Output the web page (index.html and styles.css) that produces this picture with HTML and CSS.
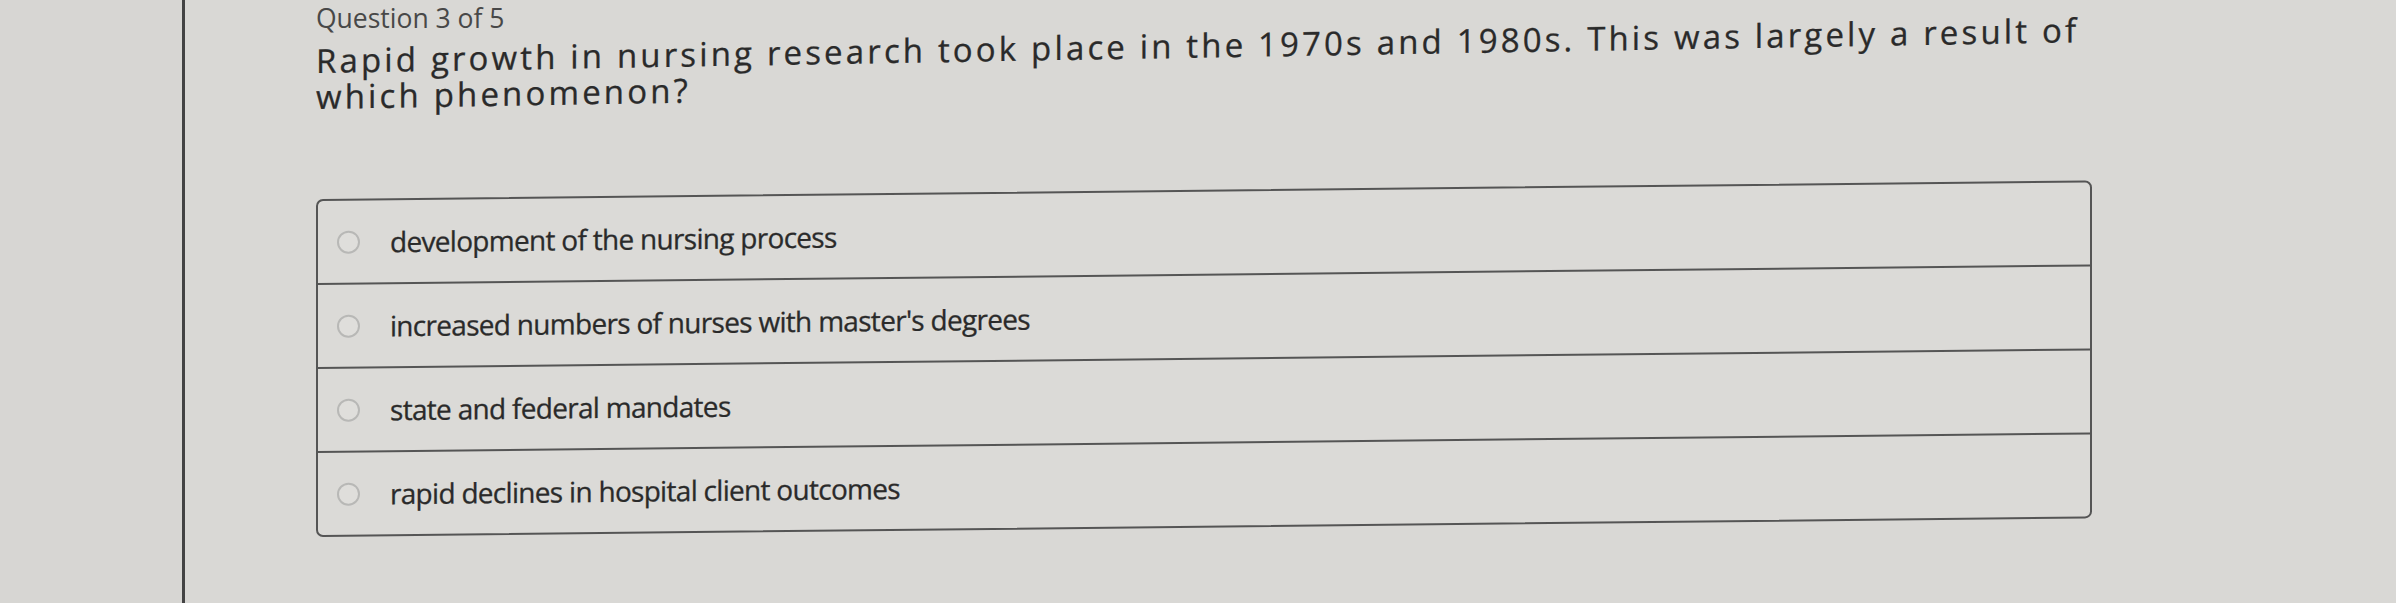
FILE: index.html
```html
<!DOCTYPE html>
<html lang="en">
<head>
    <meta charset="UTF-8">
    <meta name="viewport" content="width=device-width, initial-scale=1.0">
    <title>Question 3 of 5</title>
    <link rel="stylesheet" href="styles.css">
</head>
<body>
    <div class="page">
        <div class="side"></div>
        <div class="main">
            <div class="progress">Question 3 of 5</div>
            <p class="question">Rapid growth in nursing research took place in the 1970s and 1980s. This was largely a result of which phenomenon?</p>

            <ul class="answers">
                <li class="answer"><span class="radio"></span>development of the nursing process</li>
                <li class="answer"><span class="radio"></span>increased numbers of nurses with master's degrees</li>
                <li class="answer"><span class="radio"></span>state and federal mandates</li>
                <li class="answer"><span class="radio"></span>rapid declines in hospital client outcomes</li>
            </ul>
        </div>
    </div>
</body>
</html>
```
FILE: styles.css
```css
html, body {
    height: 100%;
}
body {
    margin: 0;
    background-color: #d9d8d5;
    color: #333;
    font-family: 'Open Sans', 'Liberation Sans', sans-serif;
    overflow: hidden;
}
.page {
    display: flex;
    height: 100%;
}
.side {
    width: 182px;
    flex-shrink: 0;
    background-color: #d7d6d3;
    border-right: 3px solid #434343;
}
.main {
    flex: 1;
    padding-left: 131px;
}
.progress {
    font-size: 26.5px;
    line-height: 36px;
    color: #484848;
}
/* the shot is a photo taken a little off-axis, so the right side sits higher */
.question {
    width: 1810px;
    margin: 7px 0 0;
    font-size: 33px;
    line-height: 36px;
    letter-spacing: 3.15px;
    color: #2a2a2a;
    -webkit-text-stroke: 0.3px #2a2a2a;
    transform: skewY(-1deg);
    transform-origin: 0 0;
}
.answers {
    list-style-type: none;
    width: 1772px;
    margin: 84px 0 0;
    padding: 0;
    border: 2px solid #555;
    border-radius: 7px;
    background-color: #dbdad7;
    transform: skewY(-0.6deg);
    transform-origin: 0 0;
}
.answer {
    display: flex;
    align-items: center;
    gap: 30px;
    height: 82px;
    padding-left: 19px;
    font-size: 28px;
    letter-spacing: -0.7px;
    color: #2a2a2a;
    -webkit-text-stroke: 0.3px #2a2a2a;
}
.answer + .answer {
    border-top: 2px solid #555;
}
.radio {
    width: 19px;
    height: 19px;
    flex-shrink: 0;
    border: 2px solid #b8b8b6;
    border-radius: 50%;
    background-color: #dfdedb;
}
```
